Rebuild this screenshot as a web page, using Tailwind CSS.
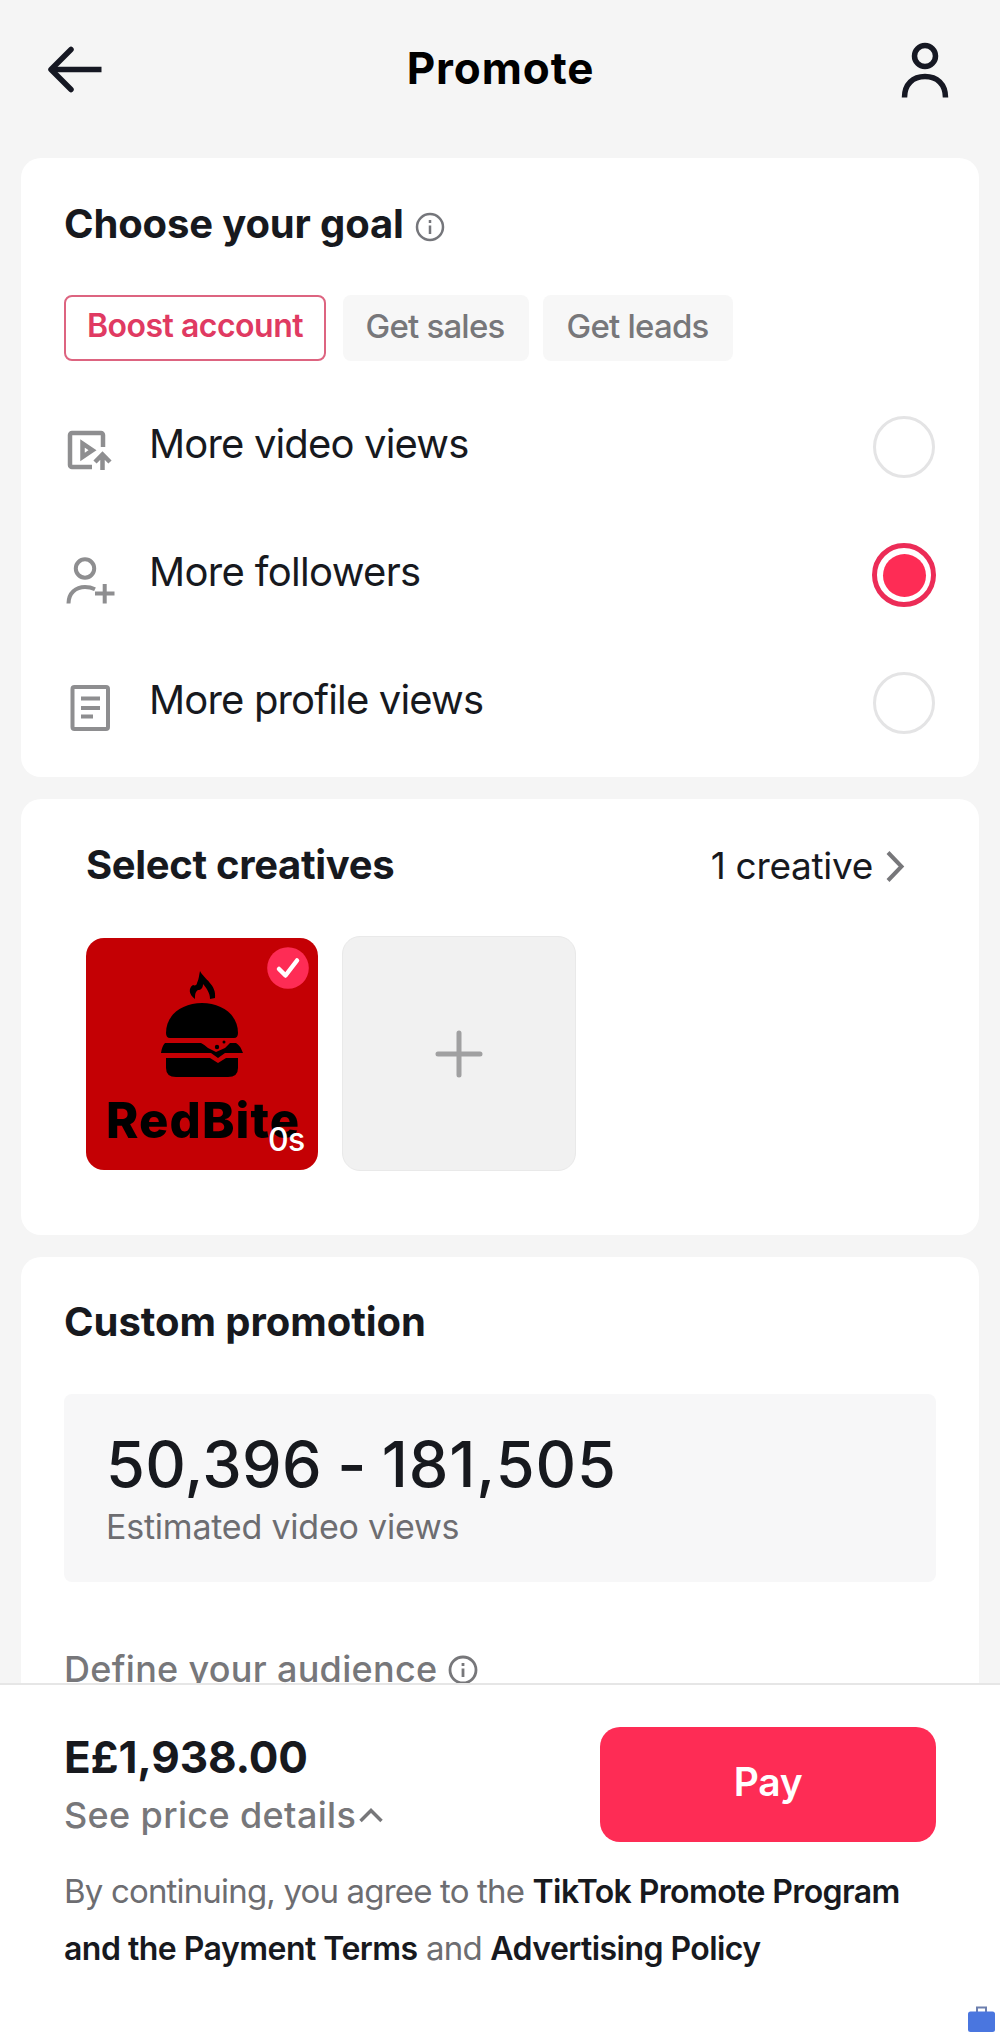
<!DOCTYPE html>
<html lang="en">
<head>
    <meta charset="UTF-8">
    <meta name="viewport" content="width=device-width, initial-scale=1.0">
    <title>Promote</title>
    <script src="https://cdn.jsdelivr.net/npm/@tailwindcss/browser@4"></script>
</head>
<body class="bg-[#f5f5f5] font-['Inter',sans-serif] text-[#17191e]">
    <div class="flex flex-col w-[1000px] h-[2038px] overflow-hidden">
        <main class="h-[1683px] shrink-0 overflow-hidden px-[21px]">
            <!-- Header -->
            <header class="flex items-center justify-between h-[138px] pl-[25px] pr-[27px]">
                <svg class="w-15 h-15" viewBox="0 0 60 60" fill="none" stroke="#161823" stroke-width="5.5" stroke-linecap="round" stroke-linejoin="round">
                    <path d="M25 10.500L5 30.500L25 50.500"/>
                    <path d="M6 30.500H55.500" stroke-linecap="butt"/>
                </svg>
                <h1 class="pl-[3px] pb-0.5 text-[44px] leading-none font-bold tracking-[0.9px] text-black">Promote</h1>
                <svg class="w-15 h-15" viewBox="0 0 60 60" fill="none" stroke="#161823" stroke-width="5.5">
                    <circle cx="33" cy="17" r="10.500"/>
                    <path d="M12.500 58.500C12.500 45 21 37.500 33 37.500S53.500 45 53.500 58.500"/>
                </svg>
            </header>

            <!-- Goal -->
            <section class="mt-5 h-[619px] bg-white rounded-[20px] pt-[46px] px-[43px]">
                <div class="flex items-center gap-[11px]">
                    <h2 class="text-[40px] leading-none font-bold tracking-[-0.15px]">Choose your goal</h2>
                    <svg class="w-[30px] h-[30px] mt-1.5" viewBox="0 0 30 30" fill="none" stroke="#75767b" stroke-width="2.5">
                        <circle cx="15" cy="15" r="13"/>
                        <path d="M15 13.500V22M15 8V11"/>
                    </svg>
                </div>
                <div class="flex mt-[51px] h-[66px] leading-none text-[33px]">
                    <button class="w-[262px] pb-1 border-2 border-[#dd6480] rounded-lg text-[32px] font-semibold tracking-[-0.5px] text-[#e03a62]">Boost account</button>
                    <button class="w-[186px] ml-[17px] pb-1 pr-0.5 bg-[#f7f7f7] rounded-lg font-medium tracking-[-0.79px] text-[#77777a]">Get sales</button>
                    <button class="w-[190px] ml-[14px] pb-1 pr-px bg-[#f7f7f7] rounded-lg font-medium tracking-[-0.78px] text-[#77777a]">Get leads</button>
                </div>
                <div class="mt-[21px] text-[40px] leading-none tracking-[-0.84px]">
                    <div class="flex items-center h-32">
                        <svg class="w-14 h-16 mr-[29px]" viewBox="0 0 56 64" fill="none" stroke="#8e8e90" stroke-width="4.500">
                            <path d="M39 33V21a2 2 0 0 0-2-2H8a2 2 0 0 0-2 2V51a2 2 0 0 0 2 2H28"/>
                            <path d="M18.500 29.500V43L28.500 36.200Z"/>
                            <path d="M38.500 56V42M31 48L38.500 40.500L46 48"/>
                        </svg>
                        <span class="pb-1">More video views</span>
                        <span class="ml-auto mr-px mt-px w-[62px] h-[62px] rounded-full border-3 border-[#e4e4e5]"></span>
                    </div>
                    <div class="flex items-center h-32">
                        <svg class="w-14 h-16 mr-[29px]" viewBox="0 0 56 64" fill="none" stroke="#8e8e90" stroke-width="4">
                            <circle cx="21" cy="26.500" r="9.200"/>
                            <path d="M4.500 61.500C4.500 51 12 45 21 45c4 0 7 .8 10 2.200"/>
                            <path d="M31 51.500H50.500M40.700 42V61.500"/>
                        </svg>
                        <span class="pb-1 tracking-[-0.67px]">More followers</span>
                        <span class="ml-auto mt-0.5 flex items-center justify-center w-16 h-16 rounded-full border-[5px] border-[#ec2c57]">
                            <span class="w-[43px] h-[43px] rounded-full bg-[#fe2c55]"></span>
                        </span>
                    </div>
                    <div class="flex items-center h-32">
                        <svg class="w-14 h-16 mr-[29px]" viewBox="0 0 56 64" fill="none" stroke="#8e8e90" stroke-width="4">
                            <rect x="8.500" y="17" width="35.500" height="42" rx="2"/>
                            <path d="M17 28.500H36M17 38H36M17 46.500H29"/>
                        </svg>
                        <span class="pb-1">More profile views</span>
                        <span class="ml-auto mr-px mt-0.5 w-[62px] h-[62px] rounded-full border-3 border-[#e4e4e5]"></span>
                    </div>
                </div>
            </section>

            <!-- Creatives -->
            <section class="mt-[22px] h-[436px] bg-white rounded-[20px] pt-[46px] px-[65px]">
                <div class="flex items-center justify-between">
                    <h2 class="text-[40px] leading-none font-bold tracking-[-0.33px]">Select creatives</h2>
                    <div class="flex items-center gap-3 mr-[9px]">
                        <span class="text-[37px] leading-none tracking-[-0.31px]">1 creative</span>
                        <svg class="w-5 h-8 mt-0.5" viewBox="0 0 20 32" fill="none" stroke="#77777a" stroke-width="4">
                            <path d="M3 2.500L16.500 16.500L3 30.500"/>
                        </svg>
                    </div>
                </div>
                <div class="flex items-center gap-6 mt-[51px]">
                    <div class="relative w-[232px] h-[232px] rounded-[18px] bg-[#c40004] overflow-hidden">
                        <!-- Burger logo -->
                        <svg class="absolute left-[73px] top-[33px] w-[86px] h-[108px]" viewBox="0 0 86 108">
                            <path d="M41 0C45 8 58 14 56 27L51 28C51 22 48 18 44 13C44 17 42 19 39 19C36 21 36 24 36 28C30 24 29 17 34 14C36 15 38 14 38 12C40 8 40 4 41 0Z"/>
                            <path d="M11 67Q7 67 7 62C7 43 24 32 43 32S79 43 79 62Q79 67 75 67H43Z"/>
                            <path d="M6 72H42Q46 74 49 77L57 81L66 77L71 72H77Q81 74 84 82H66L59 87L52 82H2Q3 75 6 72Z"/>
                            <circle cx="58" cy="76" r="2.200"/>
                            <circle cx="65" cy="71" r="1.500"/>
                            <path d="M7 87H51L59 92L67 87H79V97Q79 106 69 106H17Q7 106 7 97Z"/>
                        </svg>
                        <span class="absolute left-[20px] top-[158px] text-[49px] leading-none font-extrabold tracking-[1.1px] text-black">RedBite</span>
                        <span class="absolute left-[182px] top-[186px] text-[32px] leading-none font-medium tracking-[-0.66px] text-white">0s</span>
                        <svg class="absolute left-[181px] top-[9px] w-[42px] h-[42px]" viewBox="0 0 42 42" fill="none">
                            <circle cx="21" cy="21" r="20.800" fill="#fe2c55"/>
                            <path d="M12 22L18.500 28.500L30 13.500" stroke="#fff" stroke-width="4.500" stroke-linecap="round" stroke-linejoin="round"/>
                        </svg>
                    </div>
                    <div class="flex items-center justify-center w-[234px] h-[235px] rounded-[18px] bg-[#f1f1f1] border border-[#e9e9e9]">
                        <svg class="w-12 h-12 mr-px" viewBox="0 0 48 48" stroke="#a0a0a1" stroke-width="5" stroke-linecap="round">
                            <path d="M3 24H45M24 3V45"/>
                        </svg>
                    </div>
                </div>
            </section>

            <!-- Custom promotion -->
            <section class="mt-[22px] h-[500px] bg-white rounded-t-[20px] pt-[45px] px-[43px]">
                <h2 class="text-[40px] leading-none font-bold tracking-[-0.05px]">Custom promotion</h2>
                <div class="mt-[52px] h-[188px] rounded-lg bg-[#f7f7f8] pt-[38px] pl-[42px]">
                    <p class="text-[63px] leading-[64px] font-medium tracking-[0.3px] [word-spacing:-2px]">50,396 - <span class="tracking-[0.9px]">181,505</span></p>
                    <p class="mt-3.5 text-[34px] leading-[34px] tracking-[-0.22px] text-[#6d6d71]">Estimated video views</p>
                </div>
                <div class="flex items-center gap-[11px] mt-[69px] text-[#77777a]">
                    <span class="text-[36px] leading-none font-medium tracking-[0.3px]">Define your audience</span>
                    <svg class="w-[30px] h-[30px] mt-0.5" viewBox="0 0 30 30" fill="none" stroke="#77777a" stroke-width="2.800">
                        <circle cx="15" cy="15" r="13"/>
                        <path d="M15 13.500V22M15 8V11"/>
                    </svg>
                </div>
            </section>
        </main>

        <!-- Payment bar -->
        <footer class="relative grow bg-white border-t-2 border-[#e6e6e6] pt-[42px] px-16">
            <div class="flex justify-between">
                <div class="pt-2">
                    <div class="text-[44px] leading-none font-bold tracking-[-0.15px]">E£1,938.00</div>
                    <div class="flex items-center gap-[3px] mt-4 h-10 text-[#77777a]">
                        <span class="text-[36px] leading-none font-medium tracking-[0.36px]">See price details</span>
                        <svg class="w-6 h-4" viewBox="0 0 24 16" fill="none" stroke="#77777a" stroke-width="3.500">
                            <path d="M1.500 14L12 3.500L22.500 14"/>
                        </svg>
                    </div>
                </div>
                <button class="w-[336px] h-[115px] pb-[7px] rounded-[20px] bg-[#fe2c55] text-[39px] leading-none font-semibold tracking-[-0.28px] text-white">Pay</button>
            </div>
            <p class="mt-[21px] text-[33px] leading-[57px] tracking-[-0.83px] text-[#6d6d71] whitespace-nowrap">
                By continuing, you agree to the <span class="text-[32px] font-semibold tracking-[-0.6px] text-[#17191e]">TikTok Promote Program</span><br>
                <span class="text-[32px] font-semibold tracking-[-0.52px] text-[#17191e]">and the Payment Terms</span> and <span class="text-[32px] font-semibold tracking-[-0.55px] text-[#17191e]">Advertising Policy</span>
            </p>
            <svg class="absolute right-[5px] bottom-[6px] w-[27px] h-[26px]" viewBox="0 0 27 26">
                <path d="M9 6V1.500H18V6" fill="none" stroke="#6c7fae" stroke-width="2"/>
                <rect x="0" y="5.500" width="27" height="20.500" rx="2.500" fill="#4a76df"/>
            </svg>
        </footer>
    </div>
</body>
</html>
